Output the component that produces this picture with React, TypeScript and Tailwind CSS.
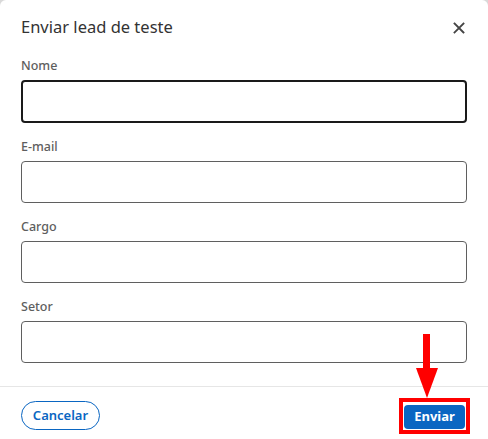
import React from 'react';

const fields = ['Nome', 'E-mail', 'Cargo', 'Setor'];

export default function App() {
  return (
    <div className="min-h-[439px] w-[488px] bg-[#d9d9d9]">
      <div
        className="relative h-[439px] w-[488px] rounded-t-[6px] bg-white text-[rgba(0,0,0,0.9)]"
        style={{ fontFamily: '"Noto Sans", "Open Sans", Arial, sans-serif' }}
      >
        <header className="flex h-[56px] items-center justify-between pl-[21px] pr-[22px] pb-[1px]">
          <h2 className="text-[16.5px] font-normal leading-none text-[#333]">Enviar lead de teste</h2>
          <button className="flex h-[14px] w-[14px] items-center justify-center" aria-label="Fechar">
            <svg width="12" height="12" viewBox="0 0 12 12" fill="none" stroke="#444" strokeWidth="1.8" strokeLinecap="square">
              <path d="M1.5 1.5 L10.5 10.5 M10.5 1.5 L1.5 10.5" />
            </svg>
          </button>
        </header>

        <div className="flex flex-col gap-[14px] px-[21px]">
          {fields.map((label, i) => (
            <Field key={label} label={label} focused={i === 0} />
          ))}
        </div>

        <div className="mt-[23px] border-t border-[#e6e6e6]" />

        <footer className="flex items-center justify-between pl-[21px] pr-[18px] pt-[11px]">
          <button className="h-[29px] w-[79px] rounded-full border border-[#0a66c2] text-[13px] font-semibold leading-none text-[#0a66c2]">
            Cancelar
          </button>
          <div className="border-4 border-[#ff0000] p-px">
            <button className="h-[24px] w-[61px] rounded-[4px] bg-[#0a66c2] text-[13px] font-bold leading-none text-white">
              Enviar
            </button>
          </div>
        </footer>

        {/* annotation arrow */}
        <svg className="absolute left-[414px] top-[334px]" width="26" height="66" viewBox="0 0 26 66">
          <rect x="9" y="0" width="7" height="35" fill="#ff0000" />
          <polygon points="2,34 24,34 13,64" fill="#ff0000" />
        </svg>
      </div>
    </div>
  );
}

function Field({ label, focused }: { label: string; focused?: boolean }) {
  return (
    <label className="flex flex-col">
      <span className="mb-[4px] h-[20px] text-[12.5px] font-medium leading-[20px] text-[#5e5e5e]">{label}</span>
      <input
        className={
          focused
            ? 'h-[43px] w-full rounded-[4px] border-2 border-[#1a1a1a] bg-white outline-none'
            : 'h-[42px] w-full rounded-[4px] border border-[#5f5f5f] bg-white outline-none'
        }
      />
    </label>
  );
}
